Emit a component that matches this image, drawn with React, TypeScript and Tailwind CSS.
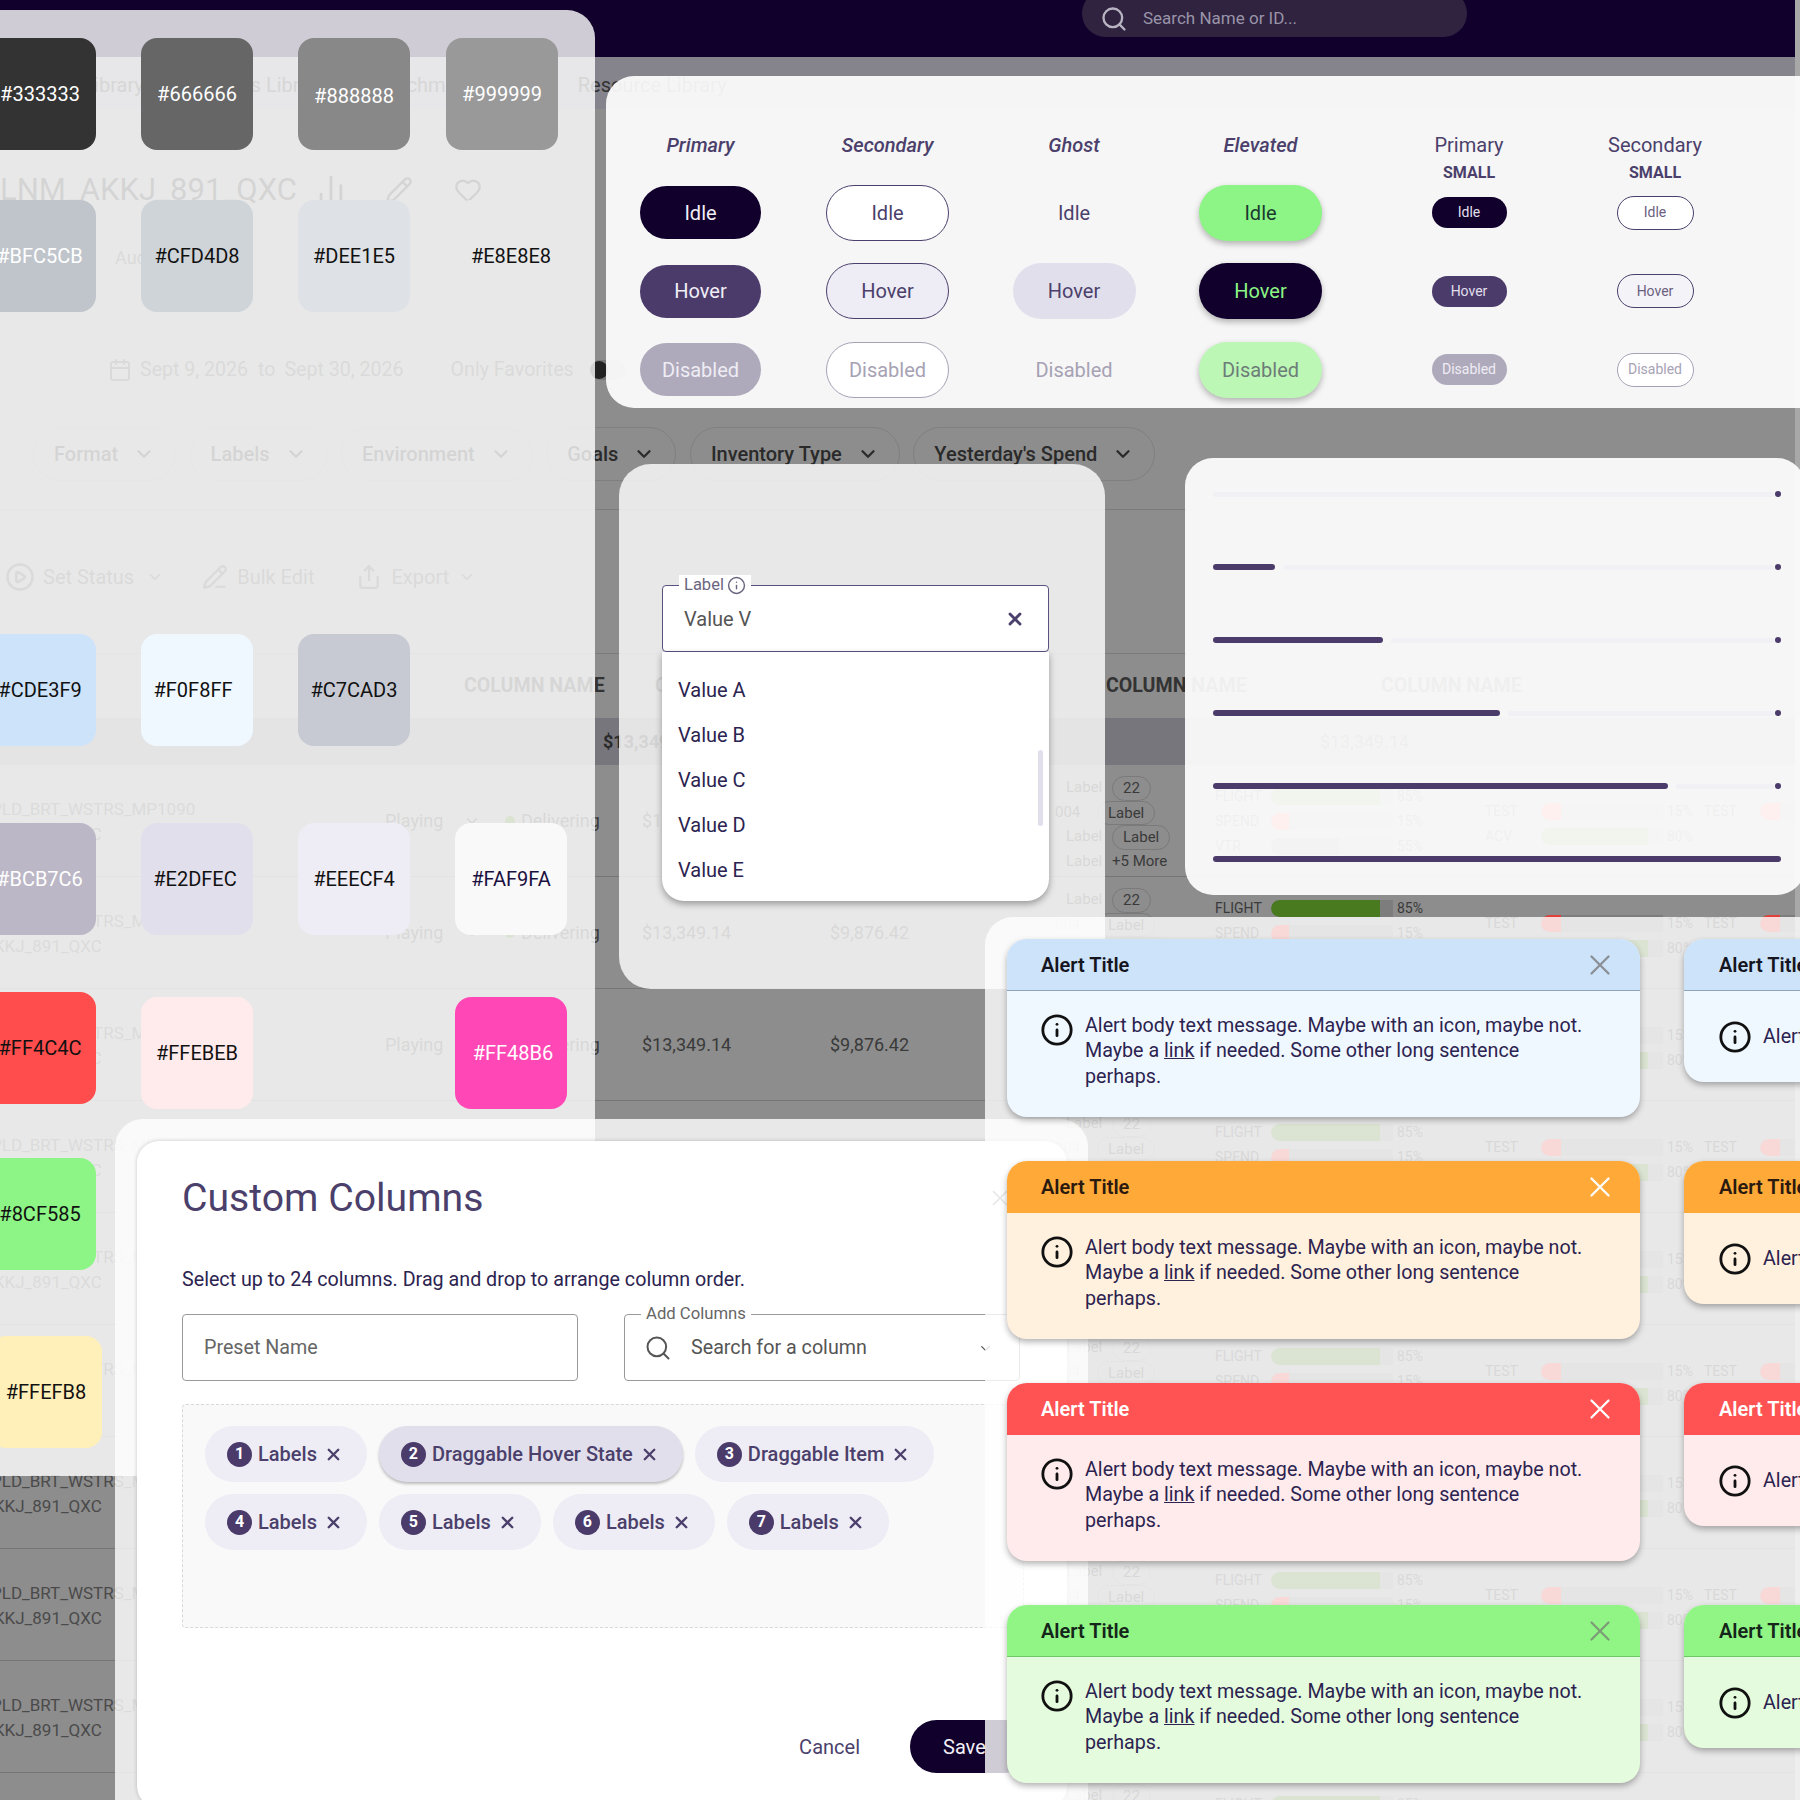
import { Search, ChevronDown, X, Info, ChartNoAxesColumn, Pencil, Heart, Calendar, CirclePlay, PencilLine, Share } from "lucide-react";

const swatch = "w-[112px] h-[112px] rounded-[16px] flex items-center justify-center text-[20px] shrink-0";

function Swatch({ label, className }: { label: string; className: string }) {
  return <div className={`${swatch} ${className}`}>{label}</div>;
}

function Palette() {
  return (
    <div className="absolute left-0 top-[10px] w-[595px] h-[1466px] rounded-tr-[28px] bg-white/80">
      <div className="ml-[-16px] flex flex-col">
        <div className="mt-[28px] flex gap-[45px]">
          <Swatch label="#333333" className="bg-[#333333] text-white" />
          <Swatch label="#666666" className="bg-[#666666] text-white" />
          <Swatch label="#888888" className="bg-[#888888] text-white pt-[3px]" />
          <Swatch label="#999999" className="bg-[#999999] text-white ml-[-9px]" />
        </div>
        <div className="mt-[50px] flex gap-[45px]">
          <Swatch label="#BFC5CB" className="bg-[#bfc5cb] text-white" />
          <Swatch label="#CFD4D8" className="bg-[#cfd4d8] text-[#111]" />
          <Swatch label="#DEE1E5" className="bg-[#dee1e5] text-[#111]" />
          <Swatch label="#E8E8E8" className="bg-[#e8e8e8] text-[#111]" />
        </div>
        <div className="mt-[322px] flex gap-[45px]">
          <Swatch label="#CDE3F9" className="bg-[#cde3f9] text-[#111]" />
          <Swatch label="#F0F8FF" className="bg-[#f0f8ff] text-[#111] pr-[8px]" />
          <Swatch label="#C7CAD3" className="bg-[#c7cad3] text-[#111]" />
        </div>
        <div className="mt-[77px] flex gap-[45px]">
          <Swatch label="#BCB7C6" className="bg-[#bcb7c6] text-white" />
          <Swatch label="#E2DFEC" className="bg-[#e2dfec] text-[#111] pr-[4px]" />
          <Swatch label="#EEECF4" className="bg-[#eeecf4] text-[#111]" />
          <Swatch label="#FAF9FA" className="bg-[#faf9fa] text-[#1a1040]" />
        </div>
        <div className="mt-[57px] flex gap-[45px] items-start">
          <Swatch label="#FF4C4C" className="bg-[#ff4c4c] text-[#111]" />
          <Swatch label="#FFEBEB" className="bg-[#ffebeb] text-[#111] mt-[5px]" />
          <div className="w-[112px] shrink-0" />
          <Swatch label="#FF48B6" className="bg-[#ff48b6] text-white mt-[5px] pl-[4px]" />
        </div>
        <div className="mt-[49px] flex">
          <Swatch label="#8CF585" className="bg-[#8cf585] text-[#111]" />
        </div>
        <div className="mt-[66px] ml-[6px] flex">
          <Swatch label="#FFEFB8" className="bg-[#ffefb8] text-[#111]" />
        </div>
      </div>
    </div>
  );
}

function MetricBar({ label, pct, fill, bar }: { label: string; pct: string; fill: string; bar: string }) {
  return (
    <div className="flex items-center h-[25px] text-[14px] text-[#3a3a3a]">
      <span className="w-[56px] shrink-0">{label}</span>
      <div className="w-[122px] h-[17px] rounded-l-full bg-[#7d7d7d] overflow-hidden shrink-0">
        <div className={`h-full rounded-l-full ${fill} ${bar}`} />
      </div>
      <span className="ml-[4px]">{pct}</span>
    </div>
  );
}

function TableRow() {
  return (
    <div className="flex h-[112px] border-b border-[#757575] text-[#3a3a3a] shrink-0">
      <div className="w-[385px] shrink-0 pt-[32px] text-[17px] leading-[25px] overflow-hidden whitespace-nowrap text-[#4a4a4a]">
        <div className="ml-[-9px]">PLD_BRT_WSTRS_MP1090</div>
        <div className="ml-[-61px]">LNM_AKKJ_891_QXC</div>
      </div>
      <div className="w-[120px] shrink-0 flex items-center gap-[20px] text-[18px]">
        Playing
        <ChevronDown size={18} />
      </div>
      <div className="w-[137px] shrink-0 flex items-center gap-[6px] text-[18px]">
        <span className="w-[10px] h-[10px] rounded-full bg-[#4a7a1f]" />
        Delivering
      </div>
      <div className="w-[188px] shrink-0 flex items-center text-[18px]">$13,349.14</div>
      <div className="w-[236px] shrink-0 flex items-center text-[18px]">$9,876.42</div>
      <div className="w-[149px] shrink-0 pt-[11px] text-[15px] leading-[22.5px]">
        <div className="flex">
          <span className="w-[46px]">Label</span>
          <span className="px-[10px] rounded-full border border-[#7a7a7a]">22</span>
        </div>
        <div className="flex ml-[-11px]">
          <span className="w-[42px]">004</span>
          <span className="px-[10px] rounded-full border border-[#7a7a7a]">Label</span>
        </div>
        <div className="flex">
          <span className="w-[46px]">Label</span>
          <span className="px-[10px] rounded-full border border-[#7a7a7a]">Label</span>
        </div>
        <div className="flex">
          <span className="w-[46px]">Label</span>
          <span>+5 More</span>
        </div>
      </div>
      <div className="w-[270px] shrink-0 pt-[19px]">
        <MetricBar label="FLIGHT" pct="85%" fill="bg-[#4a7a1f]" bar="w-[109px]" />
        <MetricBar label="SPEND" pct="15%" fill="bg-[#e0403c]" bar="w-[18px]" />
        <MetricBar label="VTR" pct="55%" fill="bg-[#666666]" bar="w-[68px]" />
      </div>
      <div className="w-[219px] shrink-0 pt-[34px]">
        <MetricBar label="TEST" pct="15%" fill="bg-[#e0403c]" bar="w-[20px]" />
        <MetricBar label="ACV" pct="80%" fill="bg-[#4a7a1f]" bar="w-[107px]" />
      </div>
      <div className="w-[91px] shrink-0 pt-[34px] overflow-hidden">
        <MetricBar label="TEST" pct="15%" fill="bg-[#e0403c]" bar="w-[20px]" />
      </div>
    </div>
  );
}

function FilterPill({ label }: { label: string }) {
  return (
    <div className="h-[54px] px-[20px] flex items-center gap-[15px] rounded-full border border-[#808080] text-[20px] font-medium text-[#2a2a2a] whitespace-nowrap">
      {label}
      <ChevronDown size={22} strokeWidth={2.5} />
    </div>
  );
}

function Dashboard() {
  return (
    <div className="w-[1795px] h-[1800px] bg-[#8d8d8d] flex flex-col overflow-hidden">
      <div className="h-[57px] shrink-0 bg-[#10002b] flex items-start">
        <div className="ml-[1082px] mt-[-10px] w-[385px] h-[47px] rounded-full bg-[#2f2340] flex items-center pl-[18px] gap-[15px] pt-[10px]">
          <Search size={28} strokeWidth={2} className="text-[#b8b4c2]" />
          <span className="text-[17px] text-[#9a94a8]">Search Name or ID...</span>
        </div>
      </div>
      <div className="h-[52px] shrink-0 bg-[#85838b] flex items-center pt-[4px] text-[20px] text-[#333] whitespace-nowrap">
        <span className="ml-[54px]">Ad Library</span>
        <span className="ml-[56px]">Assets Library</span>
        <span className="ml-[46px]">Benchmarks</span>
        <span className="ml-[94px]">Resource Library</span>
      </div>
      <div className="mt-[51px] h-[60px] shrink-0 flex items-center text-[31px] text-[#2a2a2a] whitespace-nowrap">
        LNM_AKKJ_891_QXC
        <ChartNoAxesColumn size={34} className="ml-[17px]" />
        <Pencil size={28} className="ml-[37px]" />
        <Heart size={28} className="ml-[41px]" />
      </div>
      <div className="mt-[13px] h-[48px] shrink-0 flex items-center pl-[115px] text-[18px] text-[#444]">Audience</div>
      <div className="mt-[65px] h-[48px] shrink-0 flex items-center pl-[108px] text-[19.6px] text-[#444] whitespace-nowrap">
        <Calendar size={24} />
        <span className="ml-[8px]">Sept 9, 2026</span>
        <span className="ml-[10px]">to</span>
        <span className="ml-[9px]">Sept 30, 2026</span>
        <span className="ml-[47px]">Only Favorites</span>
        <span className="ml-[16px] w-[36px] h-[20px] rounded-full bg-[#777] flex items-center">
          <span className="w-[18px] h-[18px] rounded-full bg-[#222]" />
        </span>
      </div>
      <div className="mt-[33px] pl-[33px] flex gap-[13.5px] shrink-0">
        <FilterPill label="Format" />
        <FilterPill label="Labels" />
        <FilterPill label="Environment" />
        <FilterPill label="Goals" />
        <FilterPill label="Inventory Type" />
        <FilterPill label="Yesterday's Spend" />
      </div>
      <div className="mt-[28px] h-[134px] mb-[10px] shrink-0 border-t border-[#7b7b7b] flex items-center pl-[5px] text-[20px] text-[#444]">
        <CirclePlay size={30} />
        <span className="ml-[8px]">Set Status</span>
        <ChevronDown size={18} className="ml-[12px]" />
        <PencilLine size={26} className="ml-[38px]" />
        <span className="ml-[9px]">Bulk Edit</span>
        <Share size={26} className="ml-[41px]" />
        <span className="ml-[10px]">Export</span>
        <ChevronDown size={18} className="ml-[9px]" />
      </div>
      <div className="h-[65px] shrink-0 border-t border-[#7b7b7b] flex items-center pl-[464px] text-[19.6px] font-bold text-[#333] whitespace-nowrap">
        <span className="w-[191px]">COLUMN NAME</span>
        <span className="w-[451px]">COLUMN NAME</span>
        <span className="w-[275px]">COLUMN NAME</span>
        <span>COLUMN NAME</span>
      </div>
      <div className="h-[47px] shrink-0 bg-[#77767d] flex items-center pl-[603px] text-[18px] font-bold text-[#2a2a2a]">
        <span className="w-[717px]">$13,349.14</span>
        <span className="font-normal">$13,349.14</span>
      </div>
      {Array.from({ length: 10 }).map((_, i) => (
        <TableRow key={i} />
      ))}
    </div>
  );
}

function Btn({ label, className }: { label: string; className: string }) {
  return <div className={`flex items-center justify-center rounded-full text-[20px] ${className}`}>{label}</div>;
}

function Head({ title, small, italic }: { title: string; small?: boolean; italic?: boolean }) {
  return (
    <div className="h-[30px] shrink-0 flex flex-col items-center text-[#4b3f6b] text-[20px]">
      <div className={`h-[24px] shrink-0 leading-[24px] ${italic ? "italic font-medium" : ""}`}>{title}</div>
      {small && <div className="mt-[6px] shrink-0 text-[16px] leading-[20px] font-bold">SMALL</div>}
    </div>
  );
}

function Cell({ children }: { children: React.ReactNode }) {
  return <div className="h-[58px] shrink-0 flex items-center justify-center">{children}</div>;
}

const big = "w-[121px] h-[53px]";
const bigOutlined = "w-[123px] h-[56px]";
const tiny = "w-[75px] h-[31px] !text-[14px]";
const tinyOutlined = "w-[77px] h-[34px] !text-[14px]";
const elevated = "shadow-[0_3px_6px_rgba(0,0,0,0.28)]";

function ButtonsPanel() {
  return (
    <div className="absolute left-[606px] top-[76px] w-[1200px] h-[332px] rounded-l-[28px] bg-white/[.92] pt-[57px] pl-[1px] flex">
      <div className="w-[187px] flex flex-col gap-[20.5px]">
        <Head title="Primary" italic />
        <Cell><Btn label="Idle" className={`${big} bg-[#10002b] text-[#f0eef6]`} /></Cell>
        <Cell><Btn label="Hover" className={`${big} bg-[#4b3b6b] text-[#f0eef6]`} /></Cell>
        <Cell><Btn label="Disabled" className={`${big} bg-[#aeaabb] text-[#eeecf4]`} /></Cell>
      </div>
      <div className="w-[187px] flex flex-col gap-[20.5px]">
        <Head title="Secondary" italic />
        <Cell><Btn label="Idle" className={`${bigOutlined} bg-white border-[1.5px] border-[#4b3f6b] text-[#4b3f6b]`} /></Cell>
        <Cell><Btn label="Hover" className={`${bigOutlined} bg-[#eeecf4] border-[1.5px] border-[#4b3f6b] text-[#4b3f6b]`} /></Cell>
        <Cell><Btn label="Disabled" className={`${bigOutlined} bg-white border-[1.5px] border-[#a6a2b4] text-[#a6a2b4]`} /></Cell>
      </div>
      <div className="w-[186px] flex flex-col gap-[20.5px]">
        <Head title="Ghost" italic />
        <Cell><Btn label="Idle" className={`${bigOutlined} text-[#4b3f6b]`} /></Cell>
        <Cell><Btn label="Hover" className={`${bigOutlined} bg-[#e2dfec] text-[#4b3f6b]`} /></Cell>
        <Cell><Btn label="Disabled" className={`${bigOutlined} text-[#a6a2b4]`} /></Cell>
      </div>
      <div className="w-[187px] flex flex-col gap-[20.5px]">
        <Head title="Elevated" italic />
        <Cell><Btn label="Idle" className={`${bigOutlined} ${elevated} bg-[#8cf585] text-[#1a3a30]`} /></Cell>
        <Cell><Btn label="Hover" className={`${bigOutlined} ${elevated} bg-[#10002b] text-[#8cf585]`} /></Cell>
        <Cell><Btn label="Disabled" className={`${bigOutlined} ${elevated} bg-[#bdf7b6] text-[#6d7d78]`} /></Cell>
      </div>
      <div className="ml-[22px] w-[186px] flex flex-col gap-[20.5px]">
        <Head title="Primary" small />
        <Cell><Btn label="Idle" className={`${tiny} bg-[#10002b] text-[#e2dfec]`} /></Cell>
        <Cell><Btn label="Hover" className={`${tiny} bg-[#4b3b6b] text-[#e2dfec]`} /></Cell>
        <Cell><Btn label="Disabled" className={`${tiny} bg-[#aeaabb] text-[#eeecf4]`} /></Cell>
      </div>
      <div className="w-[186px] flex flex-col gap-[20.5px]">
        <Head title="Secondary" small />
        <Cell><Btn label="Idle" className={`${tinyOutlined} bg-white border-[1.5px] border-[#4b3f6b] text-[#6a607f]`} /></Cell>
        <Cell><Btn label="Hover" className={`${tinyOutlined} bg-[#f4f3f8] border-[1.5px] border-[#4b3f6b] text-[#6a607f]`} /></Cell>
        <Cell><Btn label="Disabled" className={`${tinyOutlined} bg-white border-[1.5px] border-[#a6a2b4] text-[#a6a2b4]`} /></Cell>
      </div>
    </div>
  );
}

function SelectPanel() {
  return (
    <div className="absolute left-[619px] top-[464px] w-[486px] h-[525px] rounded-[32px] bg-white/80 pt-[121px] pl-[43px]">
      <div className="relative w-[387px] h-[67px] bg-white border-[1.5px] border-[#5b5080] rounded-[4px] flex items-center justify-between pl-[21px] pr-[23px] text-[20px] text-[#555]">
        Value V
        <X size={20} strokeWidth={3.4} className="text-[#4b3f6b]" />
        <div className="absolute left-[16px] top-[-11px] px-[5px] bg-white flex items-center gap-[3px] text-[16.5px] leading-[20px] text-[#6b6580]">
          Label
          <Info size={19} strokeWidth={1.8} />
        </div>
      </div>
      <div className="relative w-[387px] h-[249px] bg-white rounded-b-[22px] shadow-[0_3px_7px_rgba(0,0,0,0.35)] pt-[15px] pl-[16px] text-[20px] text-[#2c2350]">
        <div className="h-[45px] flex items-center">Value A</div>
        <div className="h-[45px] flex items-center">Value B</div>
        <div className="h-[45px] flex items-center">Value C</div>
        <div className="h-[45px] flex items-center">Value D</div>
        <div className="h-[45px] flex items-center">Value E</div>
        <div className="absolute right-[6px] top-[98px] w-[5px] h-[76px] rounded-full bg-[#e2dfec]" />
      </div>
    </div>
  );
}

function Slider({ fill }: { fill: string }) {
  return (
    <div className="w-[568px] h-[6px] flex items-center">
      <div className={`h-[6px] mr-[8px] rounded-full bg-[#4b3b6b] ${fill}`} />
      <div className="flex-1 h-[5px] rounded-full bg-[#f1f0f4]" />
      <div className="ml-[1px] w-[6px] h-[6px] rounded-full bg-[#4b3b6b]" />
    </div>
  );
}

function SliderPanel() {
  return (
    <div className="absolute left-[1185px] top-[458px] w-[620px] h-[437px] rounded-[28px] bg-white/[.92] pt-[33px] pl-[28px] flex flex-col gap-[67px]">
      <div className="w-[568px] h-[6px] flex items-center">
        <div className="flex-1 h-[5px] rounded-full bg-[#f1f0f4]" />
        <div className="ml-[1px] w-[6px] h-[6px] rounded-full bg-[#4b3b6b]" />
      </div>
      <Slider fill="w-[62px]" />
      <Slider fill="w-[170px]" />
      <Slider fill="w-[287px]" />
      <Slider fill="w-[455px]" />
      <div className="w-[568px] h-[6px] rounded-full bg-[#4b3b6b]" />
    </div>
  );
}

function Chip({ n, label, hover }: { n: number; label: string; hover?: boolean }) {
  return (
    <div
      className={`h-[56px] pl-[22px] pr-[24px] rounded-full flex items-center text-[20px] font-medium text-[#4b3f6b] whitespace-nowrap ${
        hover ? "bg-[#e2dfec] shadow-[0_2px_3px_rgba(0,0,0,0.25)]" : "bg-[#eeecf4]"
      }`}
    >
      <span className="w-[25px] h-[25px] rounded-full bg-[#4b3b6b] text-white text-[16px] font-bold flex items-center justify-center">{n}</span>
      <span className="ml-[6px]">{label}</span>
      <X size={19} strokeWidth={3} className="ml-[7px]" />
    </div>
  );
}

function CustomColumns() {
  return (
    <div className="absolute left-[115px] top-[1119px] w-[973px] h-[720px] rounded-[28px] bg-white/80 pl-[22px] pt-[22px]">
      <div className="w-[930px] h-[667px] rounded-[22px] bg-white shadow-[0_0_4px_rgba(0,0,0,0.2)] pl-[45px] pr-[36px] flex flex-col relative">
        <div className="mt-[33px] h-[48px] flex items-center text-[39.2px] text-[#4b3f6b]">Custom Columns</div>
        <div className="mt-[46px] h-[24px] flex items-center text-[19.7px] text-[#2c2350]">Select up to 24 columns. Drag and drop to arrange column order.</div>
        <div className="mt-[22px] flex gap-[46px]">
          <div className="w-[396px] h-[67px] border border-[#999] rounded-[4px] flex items-center pl-[21px] text-[19.7px] text-[#666]">Preset Name</div>
          <div className="relative w-[396px] h-[67px] border border-[#999] rounded-[4px] flex items-center pl-[19px] text-[19.7px] text-[#555]">
            <Search size={28} strokeWidth={1.7} className="text-[#555]" />
            <span className="ml-[19px]">Search for a column</span>
            <ChevronDown size={15} className="absolute right-[26px] top-[26px]" />
            <span className="absolute left-[16px] top-[-11px] px-[5px] bg-white text-[16.7px] leading-[20px] text-[#666]">Add Columns</span>
          </div>
        </div>
        <div className="mt-[23px] w-[842px] h-[224px] border border-dashed border-[#d9d9d9] rounded-[4px] bg-[#faf9fa] pl-[22px] pt-[21px] flex flex-col gap-[12px]">
          <div className="flex gap-[12px]">
            <Chip n={1} label="Labels" />
            <Chip n={2} label="Draggable Hover State" hover />
            <Chip n={3} label="Draggable Item" />
          </div>
          <div className="flex gap-[12px]">
            <Chip n={4} label="Labels" />
            <Chip n={5} label="Labels" />
            <Chip n={6} label="Labels" />
            <Chip n={7} label="Labels" />
          </div>
        </div>
        <div className="mt-[92px] flex items-center justify-end">
          <span className="text-[20px] text-[#4b3f6b]">Cancel</span>
          <div className="ml-[50px] w-[121px] h-[53px] rounded-full bg-[#10002b] text-[#f0eef6] text-[20px] flex items-center pl-[33px]">Save</div>
        </div>
        <X size={26} strokeWidth={1.6} className="absolute right-[54px] top-[44px] text-[#888]" />
      </div>
    </div>
  );
}

const alerts = [
  { head: "bg-[#cde3f9] border-b border-[#8fa5bb]", body: "bg-[#f0f8ff]", title: "text-[#15151f]", close: "text-[#8a8f96]" },
  { head: "bg-[#ffa938]", body: "bg-[#fff1dd]", title: "text-[#2a1a10]", close: "text-white" },
  { head: "bg-[#ff5252]", body: "bg-[#ffebeb]", title: "text-white", close: "text-white" },
  { head: "bg-[#90f585] border-b border-[#6fc765]", body: "bg-[#e4fcdd]", title: "text-[#15251a]", close: "text-[#7c9c78]" },
];

function AlertCard({ a }: { a: (typeof alerts)[number] }) {
  return (
    <div className={`w-[633px] h-[178px] rounded-[20px] shadow-[0_3px_6px_rgba(0,0,0,0.3)] overflow-hidden shrink-0 ${a.body}`}>
      <div className={`h-[52px] flex items-center justify-between pl-[34px] pr-[23px] ${a.head}`}>
        <span className={`text-[20px] font-semibold ${a.title}`}>Alert Title</span>
        <X size={34} strokeWidth={1.6} className={a.close} />
      </div>
      <div className="flex pl-[36px] pt-[22px]">
        <Info size={34} strokeWidth={2} className="text-[#111] shrink-0 ml-[-3px] mr-[-3px]" />
        <p className="ml-[14px] w-[510px] text-[19.7px] leading-[25.3px] text-[#2c2350]">
          Alert body text message. Maybe with an icon, maybe not. Maybe a <span className="underline">link</span> if needed. Some other long sentence perhaps.
        </p>
      </div>
    </div>
  );
}

function AlertCardShort({ a }: { a: (typeof alerts)[number] }) {
  return (
    <div className={`w-[633px] h-[143px] rounded-[20px] shadow-[0_3px_6px_rgba(0,0,0,0.3)] overflow-hidden shrink-0 ${a.body}`}>
      <div className={`h-[52px] flex items-center pl-[35px] ${a.head}`}>
        <span className={`text-[20px] font-semibold ${a.title}`}>Alert Title</span>
      </div>
      <div className="flex items-center pl-[37px] h-[91px]">
        <Info size={34} strokeWidth={2} className="text-[#111] shrink-0 ml-[-3px] mr-[-3px]" />
        <span className="ml-[14px] text-[19.7px] text-[#2c2350] whitespace-nowrap">Alert body text message.</span>
      </div>
    </div>
  );
}

function AlertsPanel() {
  return (
    <div className="absolute left-[985px] top-[917px] w-[830px] h-[900px] rounded-tl-[28px] bg-white/80 pl-[22px] pt-[22px] flex flex-col gap-[44px]">
      {alerts.map((a, i) => (
        <div key={i} className="flex gap-[44px]">
          <AlertCard a={a} />
          <AlertCardShort a={a} />
        </div>
      ))}
    </div>
  );
}

export default function App() {
  return (
    <div className="relative w-[1800px] h-[1800px] overflow-hidden bg-[#a8a8a8] font-['Roboto',sans-serif]">
      <Dashboard />
      <Palette />
      <ButtonsPanel />
      <SelectPanel />
      <SliderPanel />
      <CustomColumns />
      <AlertsPanel />
    </div>
  );
}
